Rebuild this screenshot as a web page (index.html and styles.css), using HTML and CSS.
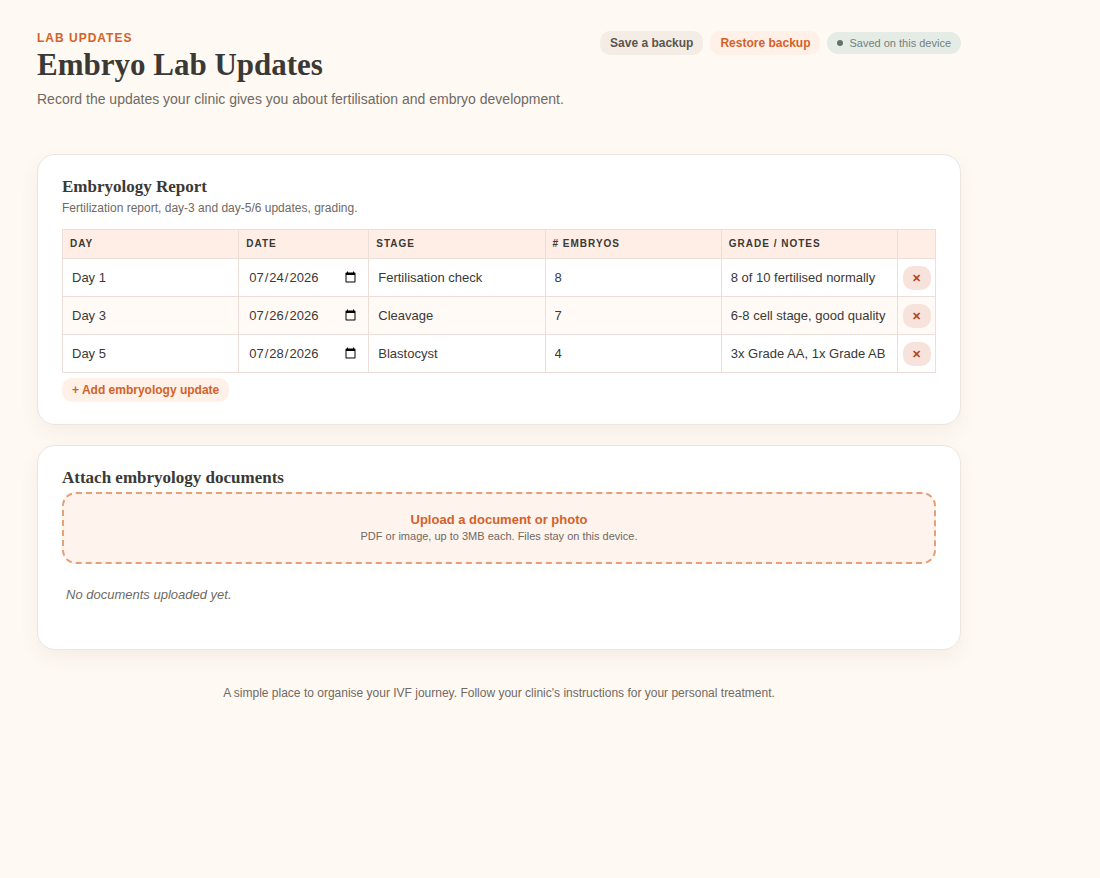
FILE: index.html
```html
<!DOCTYPE html>
<html lang="en">
<head>
    <meta charset="UTF-8">
    <meta name="viewport" content="width=device-width, initial-scale=1.0">
    <title>Embryo Lab Updates</title>
    <link rel="stylesheet" href="styles.css">
</head>
<body>

<main class="page">
    <header class="page-header">
        <div>
            <p class="eyebrow">Lab updates</p>
            <h1>Embryo Lab Updates</h1>
            <p class="lead">Record the updates your clinic gives you about fertilisation and embryo development.</p>
        </div>
        <div class="header-actions">
            <button type="button" class="btn btn-neutral">Save a backup</button>
            <button type="button" class="btn btn-soft">Restore backup</button>
            <span class="save-status"><span class="dot"></span>Saved on this device</span>
        </div>
    </header>

    <section class="card">
        <h2>Embryology Report</h2>
        <p class="card-desc">Fertilization report, day-3 and day-5/6 updates, grading.</p>
        <table class="log">
            <colgroup>
                <col>
                <col class="col-date">
                <col>
                <col>
                <col>
                <col class="col-remove">
            </colgroup>
            <thead>
                <tr>
                    <th>Day</th>
                    <th>Date</th>
                    <th>Stage</th>
                    <th># Embryos</th>
                    <th>Grade / Notes</th>
                    <th></th>
                </tr>
            </thead>
            <tbody>
                <tr>
                    <td><input type="text" aria-label="Day" value="Day 1"></td>
                    <td><input type="date" aria-label="Date" value="2026-07-24"></td>
                    <td><input type="text" aria-label="Stage" value="Fertilisation check"></td>
                    <td><input type="text" aria-label="Embryos" value="8"></td>
                    <td><input type="text" aria-label="Grade or notes" value="8 of 10 fertilised normally"></td>
                    <td class="remove-cell"><button type="button" class="btn btn-remove" aria-label="Remove row">✕</button></td>
                </tr>
                <tr>
                    <td><input type="text" aria-label="Day" value="Day 3"></td>
                    <td><input type="date" aria-label="Date" value="2026-07-26"></td>
                    <td><input type="text" aria-label="Stage" value="Cleavage"></td>
                    <td><input type="text" aria-label="Embryos" value="7"></td>
                    <td><input type="text" aria-label="Grade or notes" value="6-8 cell stage, good quality"></td>
                    <td class="remove-cell"><button type="button" class="btn btn-remove" aria-label="Remove row">✕</button></td>
                </tr>
                <tr>
                    <td><input type="text" aria-label="Day" value="Day 5"></td>
                    <td><input type="date" aria-label="Date" value="2026-07-28"></td>
                    <td><input type="text" aria-label="Stage" value="Blastocyst"></td>
                    <td><input type="text" aria-label="Embryos" value="4"></td>
                    <td><input type="text" aria-label="Grade or notes" value="3x Grade AA, 1x Grade AB"></td>
                    <td class="remove-cell"><button type="button" class="btn btn-remove" aria-label="Remove row">✕</button></td>
                </tr>
            </tbody>
        </table>
        <button type="button" class="btn btn-soft btn-add">+ Add embryology update</button>
    </section>

    <section class="card card-docs">
        <h2>Attach embryology documents</h2>
        <label class="dropzone" for="documents">
            <strong>Upload a document or photo</strong>
            <span>PDF or image, up to 3MB each. Files stay on this device.</span>
        </label>
        <input type="file" id="documents" accept="image/*,.pdf" hidden>
        <p class="empty">No documents uploaded yet.</p>
    </section>

    <footer>A simple place to organise your IVF journey. Follow your clinic's instructions for your personal treatment.</footer>
</main>

</body>
</html>
```
FILE: styles.css
```css
* {
    box-sizing: border-box;
}

body {
    margin: 0;
    font-family: "Liberation Sans", Arial, sans-serif;
    background-color: #fff9f3;
    color: #3a3935;
}

h1, h2, p {
    margin: 0;
}

h1, h2 {
    font-family: "Liberation Serif", Georgia, serif;
    font-weight: bold;
}

.page {
    max-width: 998px;
    padding: 30px 37px;
}

/* Header */
.page-header {
    display: flex;
    justify-content: space-between;
    align-items: flex-start;
    gap: 16px;
    margin-bottom: 45px;
}

.eyebrow {
    font-size: 12px;
    line-height: 16px;
    font-weight: bold;
    letter-spacing: 1px;
    text-transform: uppercase;
    color: #d2622a;
}

h1 {
    font-size: 31px;
    line-height: 38px;
}

.lead {
    margin-top: 5px;
    font-size: 14px;
    line-height: 20px;
    color: #6f6a63;
}

.header-actions {
    display: flex;
    align-items: center;
    gap: 7px;
    padding-top: 1px;
}

/* Buttons */
.btn {
    font-family: inherit;
    font-size: 12px;
    line-height: 14px;
    font-weight: bold;
    padding: 5px 10px;
    border: none;
    border-radius: 10px;
    cursor: pointer;
}

.btn-neutral {
    background-color: #f4ede6;
    color: #5d554b;
}

.btn-soft {
    background-color: #fff0e8;
    color: #d2622a;
}

.btn-remove {
    width: 28px;
    padding: 5px 0;
    font-size: 11px;
    background-color: #f8e3dc;
    color: #b5451f;
}

.btn-add {
    margin-top: 5px;
}

.save-status {
    display: flex;
    align-items: center;
    gap: 6px;
    padding: 4px 10px;
    border-radius: 12px;
    background-color: #e4ece5;
    color: #75807a;
    font-size: 11px;
    line-height: 14px;
}

.dot {
    width: 6px;
    height: 6px;
    border-radius: 50%;
    background-color: #64706a;
}

/* Cards */
.card {
    background-color: #ffffff;
    border: 1px solid #ede5df;
    border-radius: 18px;
    box-shadow: 0 8px 20px rgba(80, 60, 45, 0.06);
    padding: 22px 24px;
    margin-bottom: 20px;
}

h2 {
    font-size: 17px;
    line-height: 20px;
}

.card-desc {
    margin-top: 3px;
    margin-bottom: 13px;
    font-size: 12px;
    line-height: 16px;
    color: #6f6a63;
}

/* Embryology table */
.log {
    width: 100%;
    table-layout: fixed;
    border-collapse: collapse;
}

.col-date {
    width: 130px;
}

.col-remove {
    width: 38px;
}

.log th, .log td {
    border: 1px solid #ecdfd9;
}

.log th {
    height: 29px;
    padding: 0 7px;
    background-color: #ffeee6;
    font-size: 10px;
    line-height: 14px;
    letter-spacing: 1px;
    text-align: left;
    text-transform: uppercase;
}

.log td {
    height: 38px;
    padding: 0 3px;
}

.log tbody tr:nth-child(even) {
    background-color: #fffaf5;
}

.log input {
    display: block;
    width: 100%;
    height: 30px;
    padding: 0 6px;
    border: none;
    background: transparent;
    color: inherit;
    font-family: inherit;
    font-size: 13px;
}

.log .remove-cell {
    padding: 0;
    text-align: center;
}

/* Documents */
.card-docs {
    padding-bottom: 46px;
}

.dropzone {
    display: flex;
    flex-direction: column;
    align-items: center;
    margin-top: 4px;
    padding: 18px;
    border: 2px dashed #e5a078;
    border-radius: 14px;
    background-color: #fff3ed;
    cursor: pointer;
}

.dropzone strong {
    font-size: 13px;
    line-height: 16px;
    color: #d2622a;
}

.dropzone span {
    font-size: 11px;
    line-height: 16px;
    color: #6f6a63;
}

.empty {
    margin-top: 23px;
    padding: 0 4px;
    font-size: 13px;
    line-height: 16px;
    font-style: italic;
    color: #6f6a63;
}

footer {
    margin-top: 35px;
    font-size: 12px;
    line-height: 16px;
    text-align: center;
    color: #6f6a63;
}
```
